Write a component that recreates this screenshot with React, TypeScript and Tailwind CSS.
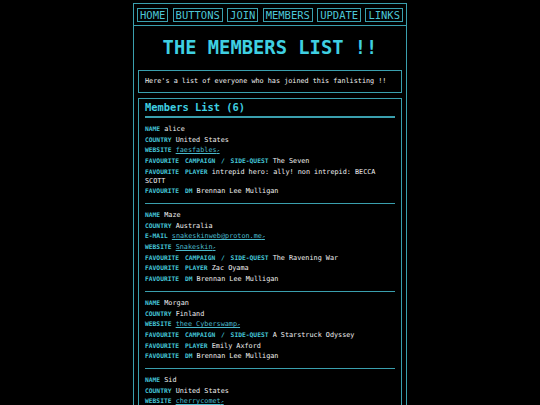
const navItems = ['HOME', 'BUTTONS', 'JOIN', 'MEMBERS', 'UPDATE', 'LINKS'];

type Field = { label: string; value: string; link?: boolean };

const members: Field[][] = [
  [
    { label: 'NAME', value: 'alice' },
    { label: 'COUNTRY', value: 'United States' },
    { label: 'WEBSITE', value: 'faesfables', link: true },
    { label: 'FAVOURITE CAMPAIGN / SIDE-QUEST', value: 'The Seven' },
    { label: 'FAVOURITE PLAYER', value: 'intrepid hero: ally! non intrepid: BECCA SCOTT' },
    { label: 'FAVOURITE DM', value: 'Brennan Lee Mulligan' },
  ],
  [
    { label: 'NAME', value: 'Maze' },
    { label: 'COUNTRY', value: 'Australia' },
    { label: 'E-MAIL', value: 'snakeskinweb@proton.me', link: true },
    { label: 'WEBSITE', value: 'Snakeskin', link: true },
    { label: 'FAVOURITE CAMPAIGN / SIDE-QUEST', value: 'The Ravening War' },
    { label: 'FAVOURITE PLAYER', value: 'Zac Oyama' },
    { label: 'FAVOURITE DM', value: 'Brennan Lee Mulligan' },
  ],
  [
    { label: 'NAME', value: 'Morgan' },
    { label: 'COUNTRY', value: 'Finland' },
    { label: 'WEBSITE', value: 'thee Cyberswamp', link: true },
    { label: 'FAVOURITE CAMPAIGN / SIDE-QUEST', value: 'A Starstruck Odyssey' },
    { label: 'FAVOURITE PLAYER', value: 'Emily Axford' },
    { label: 'FAVOURITE DM', value: 'Brennan Lee Mulligan' },
  ],
  [
    { label: 'NAME', value: 'Sid' },
    { label: 'COUNTRY', value: 'United States' },
    { label: 'WEBSITE', value: 'cherrycomet', link: true },
    { label: 'FAVOURITE CAMPAIGN / SIDE-QUEST', value: 'Fantasy High' },
    { label: 'FAVOURITE PLAYER', value: 'Siobhan Thompson' },
    { label: 'FAVOURITE DM', value: 'Brennan Lee Mulligan' },
  ],
];

const App = () => {
  return (
    <div className="min-h-screen bg-black flex justify-center font-['DejaVu_Sans_Mono',monospace]">
      <div className="w-[274px] mt-[3px] mb-[3px] self-start border border-[#3a9fae]">
        {/* nav */}
        <nav className="flex justify-between px-[3px] pt-[4px] pb-[3px] border-b border-[#3a9fae]">
          {navItems.map(item => (
            <a
              key={item}
              className="border border-[#3a9fae] px-[2px] text-[10.5px] leading-[12px] text-[#4cc6d6]"
            >
              {item}
            </a>
          ))}
        </nav>

        <div className="px-[4px] pb-[4px]">
          <h1 className="text-center font-bold text-[18.8px] leading-[22px] text-[#3fd0e2] mt-[11px] mb-[11px]">
            THE MEMBERS LIST !!
          </h1>

          <div className="border border-[#3a9fae] px-[6px] py-[7px] text-[6.8px] leading-[7px] text-[#f0f0f0]">
            Here's a list of everyone who has joined this fanlisting !!
          </div>

          <div className="mt-[5px] border border-[#3a9fae] px-[6px] pt-[2px]">
            <h2 className="font-bold text-[10.4px] leading-[12px] text-[#3fd0e2] pb-[3px] border-b-2 border-[#3a9fae]">
              Members List (6)
            </h2>

            {members.map((fields, i) => (
              <div
                key={i}
                className={`pt-[7px] pb-[5px] ${i < members.length - 1 ? 'border-b border-[#3a9fae]' : ''}`}
              >
                {fields.map(f => (
                  <div key={f.label} className="mb-[2px] text-[6.8px] leading-[8.7px] text-[#f0f0f0]">
                    <span className="font-bold text-[6.3px] text-[#45c6d8] [word-spacing:2px]">{f.label}</span>{' '}
                    {f.link ? (
                      <a className="text-[#4ab9cb] underline">
                        {f.value}
                        <span className="text-[5px]">↗</span>
                      </a>
                    ) : (
                      f.value
                    )}
                  </div>
                ))}
              </div>
            ))}
          </div>
        </div>
      </div>
    </div>
  );
};

export default App;
